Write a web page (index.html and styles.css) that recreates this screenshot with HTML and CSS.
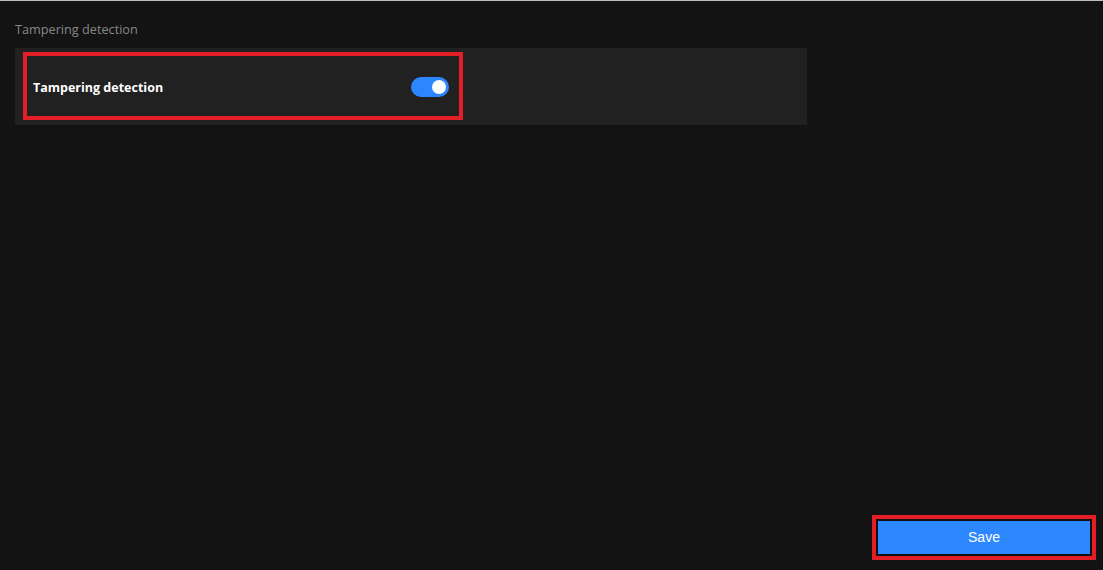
FILE: index.html
```html
<!DOCTYPE html>
<html lang="en">
<head>
<meta charset="utf-8">
<title>Tampering detection</title>
<link rel="stylesheet" href="styles.css">
</head>
<body>
<div class="page">
  <main class="content">
    <h2 class="section-title">Tampering detection</h2>
    <div class="card">
      <div class="highlight setting-row">
        <span class="setting-label">Tampering detection</span>
        <span class="switch" role="switch" aria-checked="true"><span class="knob"></span></span>
      </div>
    </div>
  </main>
  <footer class="footer">
    <div class="highlight save-wrap">
      <button class="btn-save" type="button">Save</button>
    </div>
  </footer>
</div>
</body>
</html>
```
FILE: styles.css
```css
* { box-sizing: border-box; }
html, body { height: 100%; }
body {
  margin: 0;
  background: #131313;
  border-top: 1px solid #bdbdbd;
  font-family: "Open Sans", "Noto Sans", sans-serif;
}
.page {
  display: flex;
  flex-direction: column;
  height: 100%;
}
.content {
  padding: 19px 0 0 15px;
  width: 807px;
}
.section-title {
  margin: 0;
  font-size: 12.7px;
  line-height: 18px;
  font-weight: 400;
  color: #878787;
}
.card {
  margin-top: 10px;
  background: #212121;
  height: 77px;
  padding: 4px 8px;
}
.highlight {
  border: 4px solid #e41e26;
}
.setting-row {
  width: 440px;
  height: 68px;
  display: flex;
  align-items: center;
  justify-content: space-between;
  padding: 2px 10px 0 6px;
}
.setting-label {
  color: #ffffff;
  font-size: 12.5px;
  font-weight: 700;
}
.switch {
  width: 38px;
  height: 20px;
  border-radius: 10px;
  background: #2b86ff;
  display: flex;
  align-items: center;
  justify-content: flex-end;
  padding: 0 3px;
}
.knob {
  width: 14px;
  height: 14px;
  border-radius: 50%;
  background: #ffffff;
}
.footer {
  margin-top: auto;
  display: flex;
  justify-content: flex-end;
  padding: 0 7px 10px 0;
}
.save-wrap {
  width: 224px;
  height: 45px;
}
.btn-save {
  display: block;
  width: 100%;
  height: 100%;
  margin: 0;
  border: 2px solid #101010;
  background: #2d87ff;
  color: #ffffff;
  font-family: "Liberation Sans", Arial, sans-serif;
  font-size: 14px;
  padding: 0 0 1px;
}
```
